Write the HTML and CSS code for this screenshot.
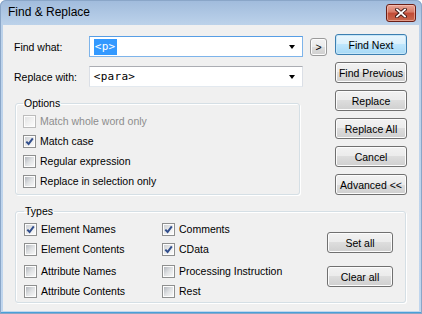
FILE: index.html
```html
<!DOCTYPE html>
<html lang="en">
<head>
    <meta charset="UTF-8">
    <title>Find &amp; Replace</title>
    <link rel="stylesheet" href="styles.css">
</head>
<body>
    <div class="window">
        <div class="titlebar">
            <span class="title">Find &amp; Replace</span>
            <button class="close-btn" title="Close">
                <svg width="12" height="10" viewBox="0 0 12 10">
                    <path d="M2 1.5 L10 8.5 M10 1.5 L2 8.5" stroke="#3b1410" stroke-width="3.6" stroke-linecap="square"/>
                    <path d="M2 1.5 L10 8.5 M10 1.5 L2 8.5" stroke="#ffffff" stroke-width="1.8" stroke-linecap="square"/>
                </svg>
            </button>
        </div>

        <div class="client">
            <div class="top-area">
                <div class="fields">
                    <div class="field-row first">
                        <label class="field-label">Find what:</label>
                        <div class="combo focused">
                            <span class="combo-text"><span class="selected">&lt;p&gt;</span></span>
                            <span class="arrow"></span>
                        </div>
                    </div>
                    <div class="field-row">
                        <label class="field-label">Replace with:</label>
                        <div class="combo">
                            <span class="combo-text">&lt;para&gt;</span>
                            <span class="arrow"></span>
                        </div>
                    </div>

                    <!-- Options -->
                    <fieldset class="group options-group">
                        <legend>Options</legend>
                        <div class="check-row disabled"><span class="cb"></span>Match whole word only</div>
                        <div class="check-row"><span class="cb checked"><svg width="9" height="9" viewBox="0 0 9 9"><path d="M1.3 4.6 L3.6 7 L7.8 1.4" fill="none" stroke="#314e8c" stroke-width="2"/></svg></span>Match case</div>
                        <div class="check-row"><span class="cb"></span>Regular expression</div>
                        <div class="check-row"><span class="cb"></span>Replace in selection only</div>
                    </fieldset>
                </div>

                <button class="btn mini-btn">&gt;</button>

                <div class="button-column">
                    <button class="btn default">Find Next</button>
                    <button class="btn">Find Previous</button>
                    <button class="btn">Replace</button>
                    <button class="btn">Replace All</button>
                    <button class="btn">Cancel</button>
                    <button class="btn">Advanced &lt;&lt;</button>
                </div>
            </div>

            <!-- Types -->
            <fieldset class="group types-group">
                <legend>Types</legend>
                <div class="types-body">
                    <div class="types-col first-col">
                        <div class="check-row"><span class="cb checked"><svg width="9" height="9" viewBox="0 0 9 9"><path d="M1.3 4.6 L3.6 7 L7.8 1.4" fill="none" stroke="#314e8c" stroke-width="2"/></svg></span>Element Names</div>
                        <div class="check-row"><span class="cb"></span>Element Contents</div>
                        <div class="check-row spaced"><span class="cb"></span>Attribute Names</div>
                        <div class="check-row"><span class="cb"></span>Attribute Contents</div>
                    </div>
                    <div class="types-col second-col">
                        <div class="check-row"><span class="cb checked"><svg width="9" height="9" viewBox="0 0 9 9"><path d="M1.3 4.6 L3.6 7 L7.8 1.4" fill="none" stroke="#314e8c" stroke-width="2"/></svg></span>Comments</div>
                        <div class="check-row"><span class="cb checked"><svg width="9" height="9" viewBox="0 0 9 9"><path d="M1.3 4.6 L3.6 7 L7.8 1.4" fill="none" stroke="#314e8c" stroke-width="2"/></svg></span>CData</div>
                        <div class="check-row spaced"><span class="cb"></span>Processing Instruction</div>
                        <div class="check-row"><span class="cb"></span>Rest</div>
                    </div>
                    <div class="types-buttons">
                        <button class="btn small-btn">Set all</button>
                        <button class="btn small-btn">Clear all</button>
                    </div>
                </div>
            </fieldset>
        </div>
    </div>
</body>
</html>
```

FILE: styles.css
```css
* {
    box-sizing: border-box;
}
body {
    margin: 0;
    font-family: 'Liberation Sans', Arial, sans-serif;
    font-size: 10.5px;
    color: #000;
    background: #ffffff;
}
.window {
    width: 422px;
    height: 314px;
    display: flex;
    flex-direction: column;
    padding: 0 3px 3px 3px;
    border-radius: 6px 6px 0 0;
    background: linear-gradient(#a0bbdc 0, #bcd2ea 25px, #c0d6ee 100%);
    box-shadow: inset 0 0 0 1px #8aa6c8, inset 0 -2px 0 #49a0d8;
}
.titlebar {
    height: 25px;
    display: flex;
    align-items: flex-start;
    padding-left: 5px;
}
.title {
    font-size: 12px;
    line-height: 25px;
    color: #000;
}
.close-btn {
    margin: 4px 3px 0 auto;
    width: 30px;
    height: 18px;
    padding: 0;
    display: flex;
    align-items: center;
    justify-content: center;
    border: 1px solid #6b1f16;
    border-radius: 3px;
    background: linear-gradient(#e8a596 0, #d77a66 45%, #c14a35 50%, #c96a4f 100%);
    box-shadow: inset 0 0 0 1px rgba(255, 210, 200, 0.5);
}
.client {
    flex: 1;
    background: #f0f0f0;
    padding: 9px 0 0 11px;
}
.top-area {
    display: flex;
    align-items: flex-start;
    height: 161px;
}
.fields {
    width: 289px;
}
.field-row {
    display: flex;
    align-items: center;
    height: 21px;
    margin-top: 9px;
}
.field-row.first {
    margin-top: 2px;
}
.field-label {
    width: 75px;
}
.combo {
    width: 215px;
    height: 21px;
    display: flex;
    align-items: center;
    padding-left: 4px;
    background: #fff;
    border: 1px solid #dbdfe6;
    border-top-color: #abadb3;
    border-bottom-color: #e3e9ef;
}
.combo.focused {
    border-color: #7eb4ea;
    border-top-color: #569de5;
}
.combo-text {
    font-family: 'DejaVu Sans Mono', 'Liberation Mono', monospace;
    font-size: 11px;
    letter-spacing: 0.3px;
}
.selected {
    background: #3399ff;
    color: #fff;
    padding: 1px 1px 2px 1px;
}
.arrow {
    margin-left: auto;
    margin-right: 7px;
    width: 0;
    height: 0;
    border-left: 3.5px solid transparent;
    border-right: 3.5px solid transparent;
    border-top: 4px solid #000;
}
.group {
    margin: 9px 0 0 1px;
    border: 1px solid #d5dfe5;
    border-radius: 3px;
    padding: 1px 0 3px 7px;
    box-shadow: inset 1px 1px 0 #fff, 1px 1px 0 #fff;
    min-width: 0;
}
.group legend {
    padding: 0 1px;
    line-height: 14px;
    font-size: 10.5px;
}
.options-group {
    width: 285px;
}
.check-row {
    display: flex;
    align-items: center;
    height: 20px;
    white-space: nowrap;
}
.check-row.spaced {
    margin-top: 2px;
}
.cb {
    flex: none;
    width: 13px;
    height: 13px;
    margin-right: 4px;
    padding: 1px;
    display: flex;
    align-items: center;
    justify-content: center;
    border: 1px solid #8e8f8f;
    background: linear-gradient(135deg, #b3b7bd 0, #dfe1e3 50%, #f7f7f7 100%) content-box, #fdfdfd;
}
.cb.checked {
    background: linear-gradient(135deg, #cdd0d4 0, #e9eaeb 50%, #fafafa 100%) content-box, #fdfdfd;
}
.disabled {
    color: #8d8d8d;
}
.disabled .cb {
    border-color: #bcbcbc;
    background: linear-gradient(135deg, #e2e3e4 0, #f0f0f0 50%, #fbfbfb 100%) content-box, #fdfdfd;
}
.btn {
    font-family: 'Liberation Sans', Arial, sans-serif;
    font-size: 10.5px;
    color: #000;
    padding: 0;
    border: 1px solid #707070;
    border-radius: 3px;
    background: linear-gradient(#f2f2f2 0, #ebebeb 50%, #dddddd 50%, #cfcfcf 100%);
    box-shadow: inset 0 0 0 1px #fcfcfc;
    white-space: nowrap;
}
.btn.default {
    border-color: #3c7fb1;
    background: linear-gradient(#eaf6fd 0, #d9f0fc 50%, #bee6fd 50%, #a7d9f5 100%);
    box-shadow: inset 0 0 0 1px #c6e6f8;
}
.mini-btn {
    width: 17px;
    height: 18px;
    margin: 4px 0 0 7px;
    border-color: #9a9a9a;
}
.button-column {
    margin-left: 8px;
    display: flex;
    flex-direction: column;
    gap: 7px;
}
.button-column .btn {
    width: 72px;
    height: 21px;
}
.types-group {
    width: 391px;
    padding: 1px 0 1px 8px;
}
.types-body {
    display: flex;
}
.first-col {
    width: 138px;
}
.second-col {
    width: 165px;
}
.types-buttons {
    padding-top: 13px;
    display: flex;
    flex-direction: column;
    gap: 13px;
}
.small-btn {
    width: 66px;
    height: 21px;
}
```
